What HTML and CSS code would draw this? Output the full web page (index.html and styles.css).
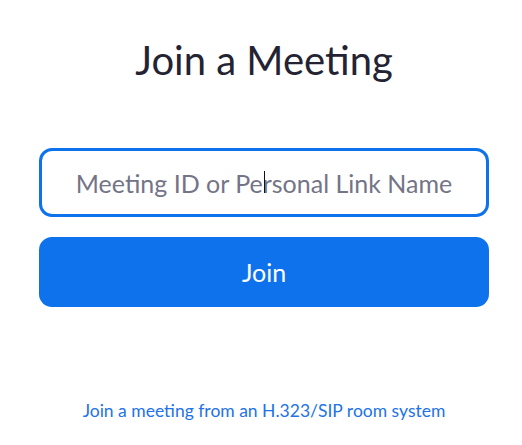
FILE: index.html
```html
<!DOCTYPE html>
<html lang="en">
<head>
    <meta charset="UTF-8">
    <meta name="viewport" content="width=device-width, initial-scale=1.0">
    <title>Join a Meeting</title>
    <link rel="stylesheet" href="styles.css">
</head>
<body>
    <div class="page">
        <h1 class="title">Join a Meeting</h1>
        <form class="join-form" onsubmit="return false;">
            <div class="field">
                <input class="meeting-input" type="text" placeholder="Meeting ID or Personal Link Name">
                <span class="ibeam"></span>
            </div>
            <button class="join-btn" type="submit">Join</button>
        </form>
        <a class="room-link" href="#">Join a meeting from an H.323/SIP room system</a>
    </div>
</body>
</html>
```

FILE: styles.css
```css
body, html {
    margin: 0;
    background: #fff;
    font-family: 'Lato', sans-serif;
}
.page {
    width: 450px;
    padding: 0 33px 0 39px;
    display: flex;
    flex-direction: column;
    align-items: center;
}
.title {
    margin: 36px 0 0;
    font-size: 40px;
    font-weight: 400;
    line-height: 48px;
    color: #232333;
}
.join-form {
    width: 100%;
    margin-top: 64px;
    display: flex;
    flex-direction: column;
    gap: 20px;
}
.field {
    position: relative;
}
.meeting-input {
    box-sizing: border-box;
    width: 100%;
    height: 69px;
    border: 3px solid #0e72ed;
    border-radius: 13px;
    padding: 0 16px;
    font-family: 'Lato', sans-serif;
    font-size: 25px;
    color: #232333;
    text-align: center;
    outline: none;
}
.meeting-input::placeholder {
    color: #747487;
}
.ibeam {
    position: absolute;
    left: 225px;
    top: 23px;
    width: 1px;
    height: 22px;
    background: #111;
}
.join-btn {
    height: 70px;
    border: none;
    border-radius: 13px;
    background: #0e72ed;
    color: #fff;
    font-family: 'Lato', sans-serif;
    font-size: 25px;
    cursor: pointer;
}
.room-link {
    margin-top: 93px;
    font-size: 17.5px;
    color: #2272e8;
    text-decoration: none;
}
```
